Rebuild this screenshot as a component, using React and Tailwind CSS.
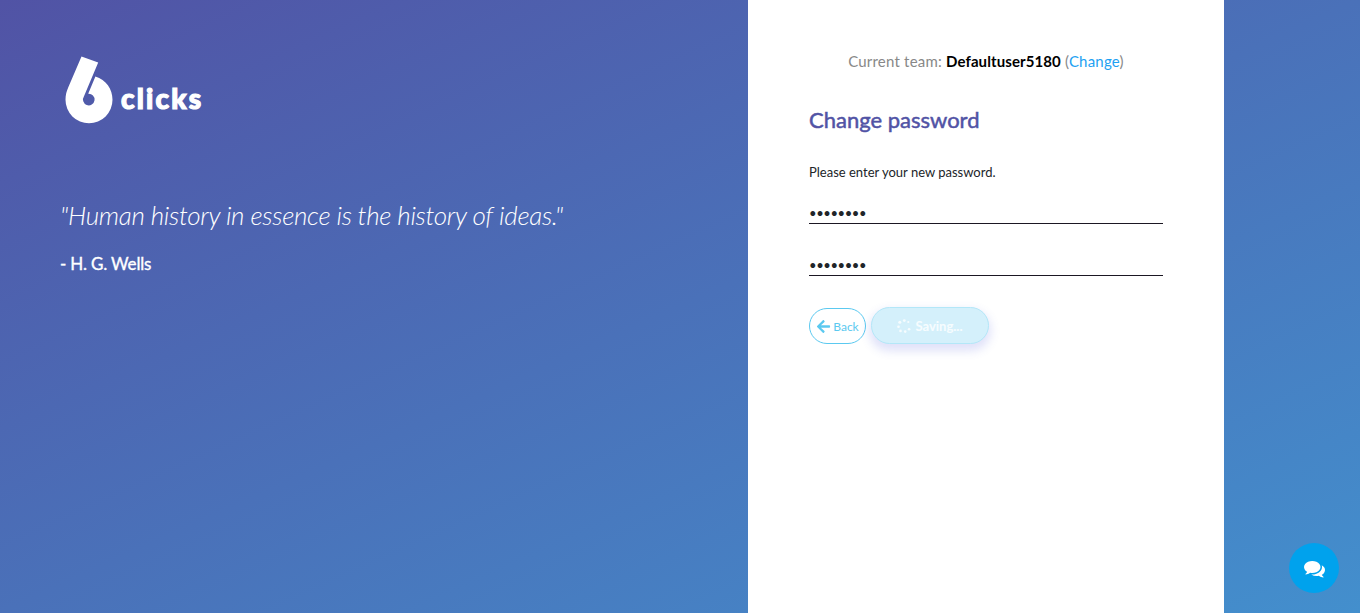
import React from "react";
import { FaArrowLeft } from "react-icons/fa";

function Logo() {
  return (
    <div className="flex h-[68px] items-start pl-[5px]">
      <svg width="48" height="68" viewBox="0 0 48 68" fill="#fff" fillRule="evenodd">
        <path d="M16.5 0.5 L33.2 6.6 L19 40.3 A5.8 5.8 0 1 0 23.2 37.8 L30.4 20.6 C41 24 47.5 33 47.5 43.8 A23.5 23.5 0 0 1 0.5 43.8 C0.5 39 1.5 35.5 3.2 31.5 Z" />
      </svg>
      <span className="mt-[25px] ml-[8px] font-['Lato'] text-[28px] leading-[34px] font-black tracking-[2.2px] text-white [-webkit-text-stroke:1.2px_white]">
        clicks
      </span>
    </div>
  );
}

function Spinner() {
  return (
    <svg width="14" height="14" viewBox="0 0 14 14" fill="currentColor">
      <circle cx="7.3" cy="1.6" r="1.4" />
      <circle cx="2.8" cy="3.2" r="1.5" />
      <circle cx="1.5" cy="7.7" r="1.3" />
      <circle cx="3.5" cy="11.9" r="1.3" />
      <circle cx="8.2" cy="12.6" r="1.3" />
      <circle cx="12.1" cy="10.3" r="1.3" />
      <circle cx="11.3" cy="3" r="1.1" />
    </svg>
  );
}

function Comments() {
  return (
    <svg width="21" height="21" viewBox="0 0 1792 1792" fill="currentColor">
      <path d="M1408 768q0 139-94 257t-256.5 186.5-353.5 68.5q-86 0-176-16-124 88-278 128-36 9-86 16h-3q-11 0-20.5-8t-11.5-21q-1-3-1-6.5t.5-6.5 2-6l2.5-5 3.5-5.5 4-5 4.5-5 4-4.5q5-6 23-25t26-29.5 22.5-29 25-38.5 20.5-44q-124-72-195-177t-71-224q0-139 94-257t256.5-186.5 353.5-68.5 353.5 68.5 256.5 186.5 94 257zm384 256q0 120-71 224.5t-195 176.5q10 24 20.5 44t25 38.5 22.5 29 26 29.5 23 25q1 1 4 4.5t4.5 5 4 5 3.5 5.5l2.5 5 2 6 .5 6.5-1 6.5q-3 14-13 22t-22 7q-50-7-86-16-154-40-278-128-90 16-176 16-271 0-472-132 58 4 88 4 161 0 309-45t264-129q125-92 192-212t67-254q0-77-23-152 129 71 204 178t75 230z" />
    </svg>
  );
}

function PasswordField({ className }) {
  return (
    <input
      type="password"
      defaultValue="password"
      className={`block w-full border-b border-[#1b1723] bg-transparent p-0 font-['Lato'] text-[13px] tracking-[-0.4px] text-[#212529] outline-none ${className}`}
    />
  );
}

export default function App() {
  return (
    <div className="flex h-[613px] w-[1360px] overflow-hidden bg-[linear-gradient(to_bottom_right,#5153a5,#438fcd)] font-['Lato',sans-serif]">
      <main className="w-[748px] pt-[56px] pl-[60px] text-white">
        <Logo />
        <p className="mt-[72px] text-[26px] leading-[39px] font-light tracking-[-0.31px] italic">
          "Human history in essence is the history of ideas."
        </p>
        <p className="mt-[15px] text-[17px] leading-[28px] tracking-[-0.18px] [-webkit-text-stroke:0.35px_white]">- H. G. Wells</p>
      </main>
      <section className="w-[476px] bg-white px-[61px] pt-[49px]">
        <div className="text-center text-[15px] leading-[24px] tracking-[0.21px] text-[#888]">
          Current team: <b className="font-bold tracking-[0.1px] text-black">Defaultuser5180</b> (
          <a className="text-[#1da1f2]">Change</a>)
        </div>
        <h1 className="mt-[30px] text-[22px] leading-[34px] text-[#5153a5] [-webkit-text-stroke:0.5px_#5153a5]">Change password</h1>
        <p className="mt-[25px] text-[13px] leading-[20px] text-[#212529]">Please enter your new password.</p>
        <PasswordField className="mt-[21px] h-[21px]" />
        <PasswordField className="mt-[31px] h-[21px]" />
        <div className="mt-[31px] flex items-center gap-[5px]">
          <button className="mt-px flex h-[36px] w-[57px] items-center justify-center gap-[2px] rounded-full border border-[#5bc9f0] text-[12px] text-[#5bc9f0]">
            <FaArrowLeft size={15} />
            <span className="relative top-px">Back</span>
          </button>
          <button className="flex h-[37px] w-[118px] items-center justify-center gap-[4px] rounded-full border border-[#b3e7f8] bg-[#d4f0fb] text-[13px] font-bold text-white/80 shadow-[0_5px_10px_2px_rgba(88,103,221,0.19)]">
            <Spinner />
            <span className="relative top-px">Saving...</span>
          </button>
        </div>
      </section>
      <aside className="flex flex-1 items-end justify-end pr-[21px] pb-[20px]">
        <button className="flex size-[50px] items-center justify-center rounded-full bg-[#00a2ed] text-white">
          <Comments />
        </button>
      </aside>
    </div>
  );
}
